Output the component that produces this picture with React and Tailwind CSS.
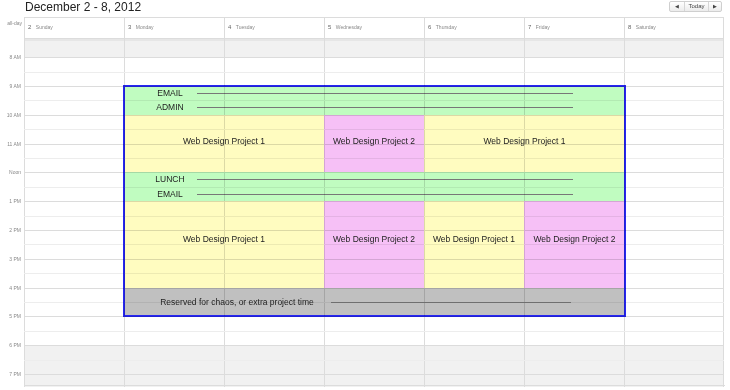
const DAYS = [
  ['2', 'Sunday'],
  ['3', 'Monday'],
  ['4', 'Tuesday'],
  ['5', 'Wednesday'],
  ['6', 'Thursday'],
  ['7', 'Friday'],
  ['8', 'Saturday'],
]

const HOURS = ['8 AM', '9 AM', '10 AM', '11 AM', 'Noon', '1 PM', '2 PM', '3 PM', '4 PM', '5 PM', '6 PM', '7 PM']

const SLOTS = HOURS.flatMap((label, i) => [
  { label, hour: true, gray: i >= 10 },
  { label: null, hour: false, gray: i >= 10 },
])

function Cells({ gray, hour }) {
  return (
    <div className={`flex border-t ${hour ? 'border-[#dcdcdc]' : 'border-[#ededed]'}`}>
      {DAYS.map(([n]) => (
        <div
          key={n}
          className={`w-[100px] border-l border-[#dcdcdc] last:border-r ${gray ? 'bg-[#f1f1f1]' : 'bg-white'}`}
        />
      ))}
    </div>
  )
}

function TaskRow({ label }) {
  return (
    <div className="flex items-center h-[14.4px]">
      <div className="ml-[18px] w-[56px] text-center">{label}</div>
      <div className="flex-1 h-px bg-[#777] mr-[52px] ml-[-1px]" />
    </div>
  )
}

function Block({ w, color, children, pt }) {
  return (
    <div className={`${w} ${color} ${pt} text-center leading-[10px]`}>{children}</div>
  )
}

export default function App() {
  return (
    <div className="w-[730px] h-[390px] overflow-hidden bg-white text-[#222]"
      style={{ fontFamily: '"Liberation Sans", Arial, sans-serif' }}>
      {/* Title bar */}
      <div className="flex items-start justify-between h-[17px]">
        <h1 className="pl-[25px] text-[12px] leading-[15px] text-[#222]">December 2 - 8, 2012</h1>
        <div className="mt-[1px] mr-[8px] flex h-[11px] rounded-[2px] border border-[#cfcfcf] bg-gradient-to-b from-white to-[#ececec] text-[6px] leading-[9px] text-[#444]">
          <span className="w-[14px] text-center text-[5px]">◀</span>
          <span className="w-[25px] text-center border-x border-[#d6d6d6]">Today</span>
          <span className="w-[12px] text-center text-[5px]">▶</span>
        </div>
      </div>

      {/* All-day / day header */}
      <div className="flex">
        <div className="w-[24px] pt-[3px] pr-[2px] text-right text-[5px] leading-[7px] text-[#888]">all-day</div>
        <div className="flex border-y border-[#dcdcdc] h-[22px]">
          {DAYS.map(([n, name]) => (
            <div key={n} className="w-[100px] border-l border-[#dcdcdc] last:border-r pl-[3px] pt-[2px] text-[#888] leading-[7px]">
              <span className="text-[6px] text-[#666]">{n}</span>{' '}
              <span className="text-[5px]">{name}</span>
            </div>
          ))}
        </div>
      </div>

      {/* Time grid */}
      <div className="relative h-[348px] overflow-hidden">
        <div className="flex">
          <div className="w-[24px]" />
          <div className="flex flex-col">
            <div className="h-[2px] flex">
              {DAYS.map(([n]) => (
                <div key={n} className="w-[100px] border-l border-[#dcdcdc] last:border-r bg-[#e6e6e6]" />
              ))}
            </div>
            <div className="h-[16.3px] flex">
              {DAYS.map(([n]) => (
                <div key={n} className="w-[100px] border-l border-[#dcdcdc] last:border-r bg-[#f1f1f1]" />
              ))}
            </div>
          </div>
        </div>
        {SLOTS.map((s, i) => (
          <div key={i} className="flex h-[14.4px]">
            <div className="relative w-[24px]">
              {s.label && (
                <span className="absolute right-[3px] top-[-4px] text-[5px] leading-[8px] text-[#888] whitespace-nowrap">
                  {s.label}
                </span>
              )}
            </div>
            <Cells gray={s.gray} hour={s.hour} />
          </div>
        ))}
        <div className="absolute left-[24px] top-[346px] w-[701px] h-px bg-[#dcdcdc]" />

        {/* Schedule overlay */}
        <div className="absolute left-[124px] top-[47.1px] w-[501px] h-[230.4px] flex flex-col mix-blend-multiply outline-2 -outline-offset-1 outline-[#2626f2] text-[8.5px] text-[#222]">
          <div className="h-[28.8px] bg-[#c0fcc0] leading-[14.4px]">
            <TaskRow label="EMAIL" />
            <TaskRow label="ADMIN" />
          </div>
          <div className="h-[57.6px] flex">
            <Block w="w-[200px]" color="bg-[#fffcc0]" pt="pt-[21px]">Web Design Project 1</Block>
            <Block w="w-[100px]" color="bg-[#f6c0f6]" pt="pt-[21px]">Web Design Project 2</Block>
            <Block w="w-[201px]" color="bg-[#fffcc0]" pt="pt-[21px]">Web Design Project 1</Block>
          </div>
          <div className="h-[28.8px] bg-[#c0fcc0] leading-[14.4px]">
            <TaskRow label="LUNCH" />
            <TaskRow label="EMAIL" />
          </div>
          <div className="h-[86.4px] flex">
            <Block w="w-[200px]" color="bg-[#fffcc0]" pt="pt-[33px]">Web Design Project 1</Block>
            <Block w="w-[100px]" color="bg-[#f6c0f6]" pt="pt-[33px]">Web Design Project 2</Block>
            <Block w="w-[100px]" color="bg-[#fffcc0]" pt="pt-[33px]">Web Design Project 1</Block>
            <Block w="w-[101px]" color="bg-[#f6c0f6]" pt="pt-[33px]">Web Design Project 2</Block>
          </div>
          <div className="h-[28.8px] bg-[#c0c0c0] flex items-center">
            <div className="ml-[33px] w-[160px] text-center whitespace-nowrap">Reserved for chaos, or extra project time</div>
            <div className="flex-1 h-px bg-[#777] ml-[14px] mr-[54px]" />
          </div>
        </div>
      </div>
    </div>
  )
}
